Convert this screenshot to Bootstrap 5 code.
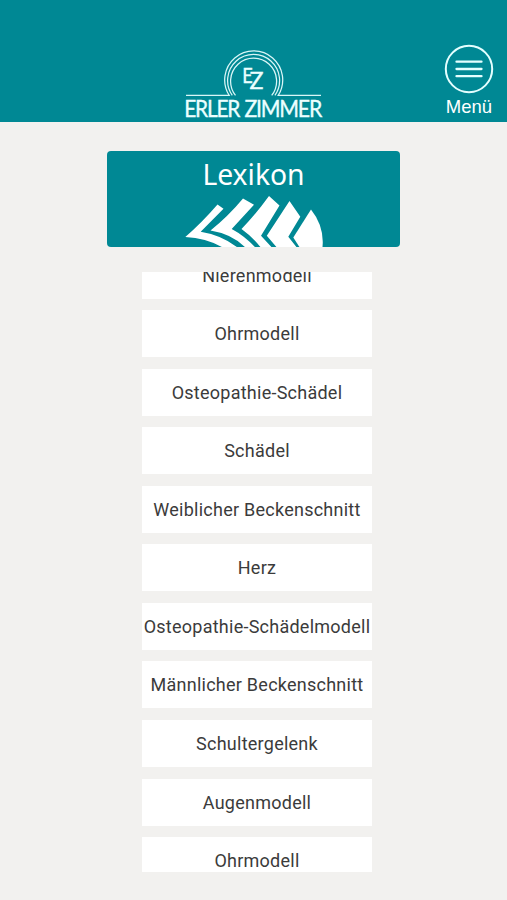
<!DOCTYPE html>
<html lang="de">
<head>
<meta charset="utf-8">
<meta name="viewport" content="width=device-width, initial-scale=1">
<title>Lexikon</title>
<link href="https://cdn.jsdelivr.net/npm/bootstrap@5.3.0/dist/css/bootstrap.min.css" rel="stylesheet">
<style>
  body { background: #f2f1ef; font-family: Roboto, "Liberation Sans", sans-serif; height: 900px; }
  .topbar { background: #008894; height: 121.5px; padding-right: 13px; }
  .brand-logo { margin-left: 182px; width: 143px; height: 72px; }
  .brand-name { letter-spacing: -1.3px; }
  .menu-toggle { width: 50px; font: 18.5px/20px "Liberation Sans", sans-serif; padding-bottom: 5px; }
  .menu-toggle svg { margin: 0 1px 3px 0; }
  .banner { background: #008894; width: 293px; height: 96.5px; border-radius: 4px; margin-top: 29px; }
  .banner-title { font: 28.3px/34px "Noto Sans", sans-serif; margin-top: 6px; }
  .topics { width: 230px; height: 600px; margin: 25px 0 0 7px; }
  .topic-stack { gap: 11.55px; margin-top: -20.4px; }
  .topic { height: 47px; color: #3b3b3b; font-size: 18px; letter-spacing: .25px; line-height: 47px; }
</style>
</head>
<body class="d-flex flex-column align-items-center overflow-hidden">
<header class="topbar w-100 d-flex justify-content-between align-items-end flex-shrink-0">
  <svg class="brand-logo" viewBox="182 50 143 72" role="img" aria-label="Erler Zimmer">
    <g fill="none" stroke="#d9f6f7" stroke-width="1.25">
      <path d="M186 95.4H229.2A29 29 0 1 1 278.2 95.4H321"/>
      <path d="M232.3 95.4A26 26 0 1 1 274.9 95.4"/>
      <path d="M235.5 95.4A23 23 0 1 1 271.7 95.4"/>
    </g>
    <g fill="#ecffff" stroke="#ecffff" stroke-width=".35" font-family="Lato, sans-serif">
      <text x="242.2" y="82.6" font-size="21.5" textLength="10.5" lengthAdjust="spacingAndGlyphs">E</text>
      <text x="249.6" y="89.4" font-size="22.5" textLength="14" lengthAdjust="spacingAndGlyphs">Z</text>
      <text class="brand-name" x="184.2" y="117" font-size="22.5" textLength="55" lengthAdjust="spacingAndGlyphs">ERLER</text>
      <text class="brand-name" x="244.5" y="117" font-size="22.5" textLength="76.5" lengthAdjust="spacingAndGlyphs">ZIMMER</text>
    </g>
  </svg>
  <a class="menu-toggle d-flex flex-column align-items-center text-white text-decoration-none" href="#">
    <svg width="50" height="50" viewBox="0 0 50 50" fill="none" stroke="#e4ffff">
      <circle cx="25" cy="25" r="23.2" stroke-width="2"/>
      <path d="M12.5 17.7H37.5M12.5 25H37.5M12.5 32.2H37.5" stroke-width="2.3" stroke-linecap="round"/>
    </svg>
    <span>Menü</span>
  </a>
</header>
<section class="banner d-flex flex-column align-items-center text-white flex-shrink-0 overflow-hidden">
  <h1 class="banner-title mb-0">Lexikon</h1>
  <svg class="mt-auto flex-shrink-0" width="140" height="52" viewBox="184 195.5 140 52" fill="#fff">
    <path d="M185.3 237.5Q202 223 217.5 205L223.5 209.3L200.7 232.3Q221 235.5 237 247.6H222Q206 238.5 185.3 237.5Z"/>
    <path d="M210.5 231Q228 217 243 199L254 205.3L231.7 229.5Q244 236 255 247.6H245Q232 234.5 210.5 231Z"/>
    <path d="M241.5 229.5Q256 214.5 269 196.5L279.5 206L261 236.3L271.5 247.6H260.5Q252 237 241.5 229.5Z"/>
    <path d="M266.8 236.3L289.5 201.5L300.3 217.3L288.3 237.3L296.5 247.6H276.5Z"/>
    <path d="M293.3 238L311 210Q324.5 227 322.5 247.6H299.5Z"/>
  </svg>
</section>
<main class="topics overflow-hidden flex-shrink-0">
  <div class="topic-stack d-flex flex-column text-center text-nowrap">
    <div class="topic bg-white">Nierenmodell</div>
    <div class="topic bg-white">Ohrmodell</div>
    <div class="topic bg-white">Osteopathie-Schädel</div>
    <div class="topic bg-white">Schädel</div>
    <div class="topic bg-white">Weiblicher Beckenschnitt</div>
    <div class="topic bg-white">Herz</div>
    <div class="topic bg-white">Osteopathie-Schädelmodell</div>
    <div class="topic bg-white">Männlicher Beckenschnitt</div>
    <div class="topic bg-white">Schultergelenk</div>
    <div class="topic bg-white">Augenmodell</div>
    <div class="topic bg-white">Ohrmodell</div>
  </div>
</main>
<script src="https://cdn.jsdelivr.net/npm/bootstrap@5.3.0/dist/js/bootstrap.bundle.min.js"></script>
</body>
</html>
